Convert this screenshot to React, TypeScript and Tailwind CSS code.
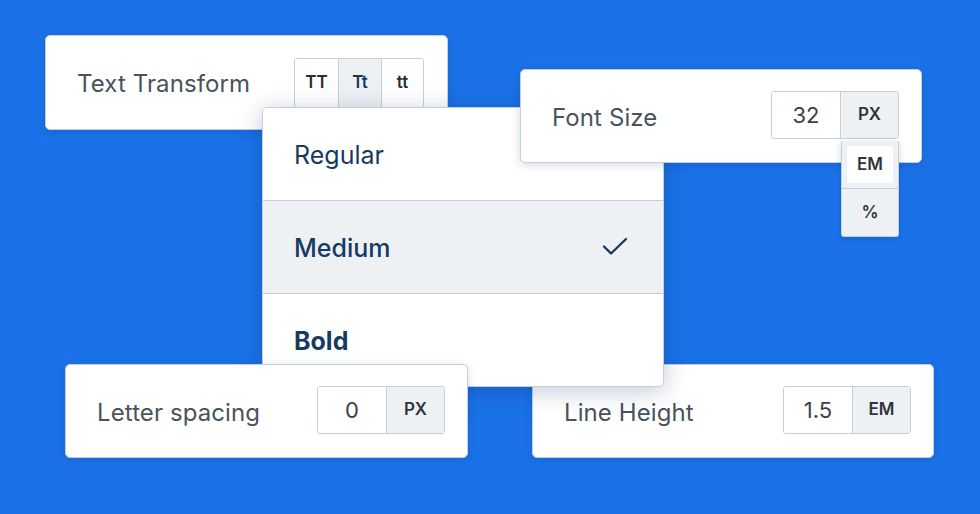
import React from "react";

const font = { fontFamily: "Inter, 'Noto Sans', sans-serif" };

function Card({
  className,
  label,
  children,
}: {
  className: string;
  label: string;
  children: React.ReactNode;
}) {
  return (
    <div
      className={`absolute flex items-center justify-between bg-white border border-[#c3cfdc] rounded-[5px] shadow-[0_2px_10px_rgba(10,40,90,0.18)] pl-[31px] pr-[22px] ${className}`}
    >
      <span className="text-[24px] text-[#4a535c] mt-[3px] tracking-[0.1px]">{label}</span>
      {children}
    </div>
  );
}

function UnitInput({ value, unit }: { value: string; unit: string }) {
  return (
    <div className="flex h-[48px] -mt-[2px] border border-[#c6ced6] rounded-[3px] overflow-hidden">
      <div className="w-[69px] flex items-center justify-center text-[22px] text-[#3a3f45] bg-white border-r border-[#c6ced6]">
        {value}
      </div>
      <div className="w-[57px] flex items-center justify-center text-[17px] font-semibold text-[#2f353b] bg-[#eef1f4]">
        {unit}
      </div>
    </div>
  );
}

function Check() {
  return (
    <svg width="28" height="22" viewBox="0 0 28 22" fill="none">
      <path
        d="M3 10.5 L10 17.5 L25 3"
        stroke="#173a63"
        strokeWidth="2.4"
        strokeLinecap="round"
        strokeLinejoin="round"
      />
    </svg>
  );
}

export default function App() {
  const weights = [
    { name: "Regular", cls: "font-normal", active: false },
    { name: "Medium", cls: "font-medium", active: true },
    { name: "Bold", cls: "font-bold", active: false },
  ];

  return (
    <div className="relative w-[980px] h-[514px] bg-[#1b72e8] overflow-hidden" style={font}>
      {/* text transform */}
      <Card className="left-[45px] top-[35px] w-[403px] h-[95px] !pr-[23px]" label="Text Transform">
        <div className="flex h-[50px] self-start mt-[22px] border border-[#c6ced6] rounded-[3px] overflow-hidden">
          <div className="w-[44px] flex items-center justify-center text-[17px] font-semibold text-[#2a2f34] bg-white border-r border-[#c6ced6]">
            TT
          </div>
          <div className="w-[43px] flex items-center justify-center text-[17px] font-semibold text-[#173a63] bg-[#eef1f4] border-r border-[#c6ced6]">
            Tt
          </div>
          <div className="w-[41px] flex items-center justify-center text-[17px] font-semibold text-[#2a2f34] bg-white">
            tt
          </div>
        </div>
      </Card>

      {/* line height sits under the weight menu */}
      <Card className="left-[532px] top-[364px] w-[402px] h-[94px]" label="Line Height">
        <UnitInput value="1.5" unit="EM" />
      </Card>

      {/* weight menu */}
      <div className="absolute left-[262px] top-[107px] w-[402px] h-[280px] flex flex-col bg-white border border-[#c3cfdc] rounded-[5px] shadow-[0_4px_24px_rgba(10,40,90,0.25)] overflow-hidden">
        {weights.map((w, i) => (
          <div
            key={w.name}
            className={`flex-1 flex items-center justify-between pl-[31px] pr-[34px] text-[25px] text-[#173a63] ${w.cls} ${
              w.active ? "bg-[#eef1f4]" : "bg-white"
            } ${i < 2 ? "border-b border-[#c3cdd7]" : ""}`}
          >
            <span className="mt-[3px]">{w.name}</span>
            {w.active && <Check />}
          </div>
        ))}
      </div>

      {/* font size with unit menu open */}
      <Card className="left-[520px] top-[69px] w-[402px] h-[94px]" label="Font Size">
        <UnitInput value="32" unit="PX" />
      </Card>
      <div className="absolute left-[841px] top-[141px] w-[58px] flex flex-col bg-[#eef1f4] border border-[#c6ced6] border-t-0 rounded-b-[3px] shadow-[0_2px_6px_rgba(10,40,90,0.2)]">
        <div className="h-[48px] p-[5px] border-b border-[#c6ced6]">
          <div className="h-full flex items-center justify-center bg-white rounded-[3px] text-[17px] font-semibold text-[#2f353b]">
            EM
          </div>
        </div>
        <div className="h-[47px] flex items-center justify-center text-[17px] font-semibold text-[#2f353b]">
          %
        </div>
      </div>

      {/* letter spacing */}
      <Card className="left-[65px] top-[364px] w-[403px] h-[94px]" label="Letter spacing">
        <UnitInput value="0" unit="PX" />
      </Card>
    </div>
  );
}
